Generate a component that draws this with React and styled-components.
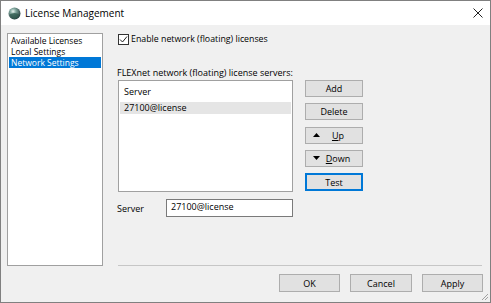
import React from "react";
import styled, { createGlobalStyle } from "styled-components";

const Global = createGlobalStyle`
  html, body { margin: 0; padding: 0; background: #ffffff; }
  #root { width: 491px; height: 303px; }
`;

const FONT = `"Open Sans", "Noto Sans", "Liberation Sans", sans-serif`;

const Window = styled.div`
  position: relative;
  width: 491px;
  height: 303px;
  box-sizing: border-box;
  border: 1px solid #808080;
  background: #f0f0f0;
  display: flex;
  flex-direction: column;
  font-family: ${FONT};
  font-size: 9px;
  color: #000;
  overflow: hidden;
`;

const TitleBar = styled.div`
  height: 24px;
  flex: none;
  background: #ffffff;
  display: flex;
  align-items: center;
  padding-left: 7px;
`;

const TitleText = styled.span`
  margin-left: 4px;
  font-size: 10px;
  color: #000;
`;

const CloseBox = styled.span`
  margin-left: auto;
  width: 22px;
  margin-right: 1px;
  display: flex;
  justify-content: center;
  align-items: center;
`;

const Body = styled.div`
  flex: 1;
  display: flex;
  flex-direction: column;
`;

const Main = styled.div`
  display: flex;
  padding: 8px 8px 0 6px;
`;

const Sidebar = styled.div`
  width: 96px;
  height: 233px;
  box-sizing: border-box;
  border: 1px solid #a0a0a0;
  background: #fff;
  padding-top: 1px;
  display: flex;
  flex-direction: column;
`;

const NavItem = styled.div`
  height: 11px;
  line-height: 11px;
  font-size: 8.5px;
  margin: 0 1px;
  padding-left: 2px;
  white-space: nowrap;
  overflow: hidden;
  background: ${(p) => (p.$selected ? "#0078d7" : "transparent")};
  color: ${(p) => (p.$selected ? "#fff" : "#000")};
`;

const RightCol = styled.div`
  flex: 1;
  margin-left: 14px;
  display: flex;
  flex-direction: column;
`;

const CheckRow = styled.label`
  display: flex;
  align-items: center;
  margin-top: 1px;
  padding-left: 1px;
  height: 11px;
`;

const CheckBox = styled.span`
  width: 11px;
  height: 11px;
  box-sizing: border-box;
  border: 1px solid #333;
  background: #fff;
  display: flex;
  align-items: center;
  justify-content: center;
`;

const CheckLabel = styled.span`
  margin-left: 2px;
  line-height: 11px;
  font-size: 8.8px;
`;

const SectionLabel = styled.div`
  margin-top: 22px;
  line-height: 11px;
  height: 11px;
`;

const ServerArea = styled.div`
  display: flex;
  margin-top: 2px;
  padding-left: 1px;
`;

const ServerList = styled.div`
  width: 175px;
  height: 112px;
  box-sizing: border-box;
  border: 1px solid #a0a0a0;
  background: #fff;
  display: flex;
  flex-direction: column;
`;

const ListHeader = styled.div`
  height: 21px;
  line-height: 21px;
  padding-left: 5px;
`;

const ListRow = styled.div`
  height: 12px;
  line-height: 12px;
  margin: 0 1px;
  padding-left: 4px;
  background: ${(p) => (p.$selected ? "#e5e5e5" : "transparent")};
`;

const ButtonCol = styled.div`
  margin-left: 12px;
  display: flex;
  flex-direction: column;
  gap: 6.25px;
`;

const Button = styled.button`
  width: ${(p) => p.$w || 58}px;
  height: ${(p) => p.$h || 17}px;
  box-sizing: border-box;
  border: 1px solid ${(p) => (p.$default ? "#0078d7" : "#adadad")};
  box-shadow: ${(p) => (p.$default ? "inset 0 0 0 1px #0078d7" : "none")};
  background: #e1e1e1;
  font-family: ${FONT};
  font-size: 9px;
  color: #000;
  padding: 0;
  display: flex;
  align-items: center;
  justify-content: center;
  position: relative;
`;

const ArrowIcon = styled.span`
  position: absolute;
  left: 7px;
  top: 50%;
  transform: translateY(-50%);
  display: flex;
`;

const Mn = styled.span`
  text-decoration: underline;
  text-underline-offset: 1px;
`;

const BtnText = styled.span`
  margin-left: ${(p) => p.$shift || 0}px;
`;

const FieldRow = styled.div`
  display: flex;
  align-items: center;
  margin-top: 7px;
`;

const FieldLabel = styled.span`
  width: 49px;
`;

const TextInput = styled.div`
  width: 127px;
  height: 18px;
  box-sizing: border-box;
  border: 1px solid #7a7a7a;
  background: #fff;
  padding-left: 4px;
  line-height: 14px;
`;

const Separator = styled.div`
  margin-top: auto;
  margin-left: 1px;
  height: 0;
  border-top: 1px solid #c6c6c6;
`;

const Footer = styled.div`
  display: flex;
  justify-content: flex-end;
  gap: 10px;
  padding: 8px 7px 0 0;
`;

const Grip = styled.svg`
  position: absolute;
  right: 1px;
  bottom: 1px;
`;

const AppIcon = () => (
  <svg width="13" height="13" viewBox="0 0 13 13">
    <defs>
      <radialGradient id="g1" cx="0.38" cy="0.32" r="0.7">
        <stop offset="0" stopColor="#e8f2ee" />
        <stop offset="0.35" stopColor="#7fa59c" />
        <stop offset="1" stopColor="#22393a" />
      </radialGradient>
    </defs>
    <circle cx="6.5" cy="6.5" r="6" fill="url(#g1)" />
    <path d="M1.5 7.5 Q6.5 4.5 11.5 7.5 Q9 12 6.5 12 Q3 12 1.5 7.5Z" fill="#2f5a4e" opacity="0.75" />
  </svg>
);

export default function App() {
  return (
    <>
      <Global />
      <Window>
        <TitleBar>
          <AppIcon />
          <TitleText>License Management</TitleText>
          <CloseBox>
            <svg width="10" height="10" viewBox="0 0 10 10">
              <path d="M0.5 0.5 L9.5 9.5 M9.5 0.5 L0.5 9.5" stroke="#222" strokeWidth="1" />
            </svg>
          </CloseBox>
        </TitleBar>
        <Body>
          <Main>
            <Sidebar>
              <NavItem>Available Licenses</NavItem>
              <NavItem>Local Settings</NavItem>
              <NavItem $selected>Network Settings</NavItem>
            </Sidebar>
            <RightCol>
              <CheckRow>
                <CheckBox>
                  <svg width="9" height="9" viewBox="0 0 9 9">
                    <path d="M1 4.5 L3.5 7 L8 1.5" fill="none" stroke="#222" strokeWidth="1" />
                  </svg>
                </CheckBox>
                <CheckLabel>Enable network (floating) licenses</CheckLabel>
              </CheckRow>
              <SectionLabel>FLEXnet network (floating) license servers:</SectionLabel>
              <ServerArea>
                <ServerList>
                  <ListHeader>Server</ListHeader>
                  <ListRow $selected>27100@license</ListRow>
                </ServerList>
                <ButtonCol>
                  <Button>Add</Button>
                  <Button>Delete</Button>
                  <Button>
                    <ArrowIcon>
                      <svg width="7" height="4" viewBox="0 0 7 4"><path d="M0 4 L3.5 0 L7 4Z" fill="#000" /></svg>
                    </ArrowIcon>
                    <BtnText $shift={8}><Mn>U</Mn>p</BtnText>
                  </Button>
                  <Button>
                    <ArrowIcon>
                      <svg width="7" height="4" viewBox="0 0 7 4"><path d="M0 0 L7 0 L3.5 4Z" fill="#000" /></svg>
                    </ArrowIcon>
                    <BtnText $shift={8}><Mn>D</Mn>own</BtnText>
                  </Button>
                  <Button $default $h={18}>Test</Button>
                </ButtonCol>
              </ServerArea>
              <FieldRow>
                <FieldLabel>Server</FieldLabel>
                <TextInput>27100@license</TextInput>
              </FieldRow>
              <Separator />
            </RightCol>
          </Main>
          <Footer>
            <Button $w={61} $h={18}>OK</Button>
            <Button $w={62} $h={18}>Cancel</Button>
            <Button $w={61} $h={18}>Apply</Button>
          </Footer>
        </Body>
        <Grip width="10" height="10" viewBox="0 0 10 10">
          <path d="M9 3 L3 9 M9 6 L6 9" stroke="#a0a0a0" strokeWidth="1" />
        </Grip>
      </Window>
    </>
  );
}
